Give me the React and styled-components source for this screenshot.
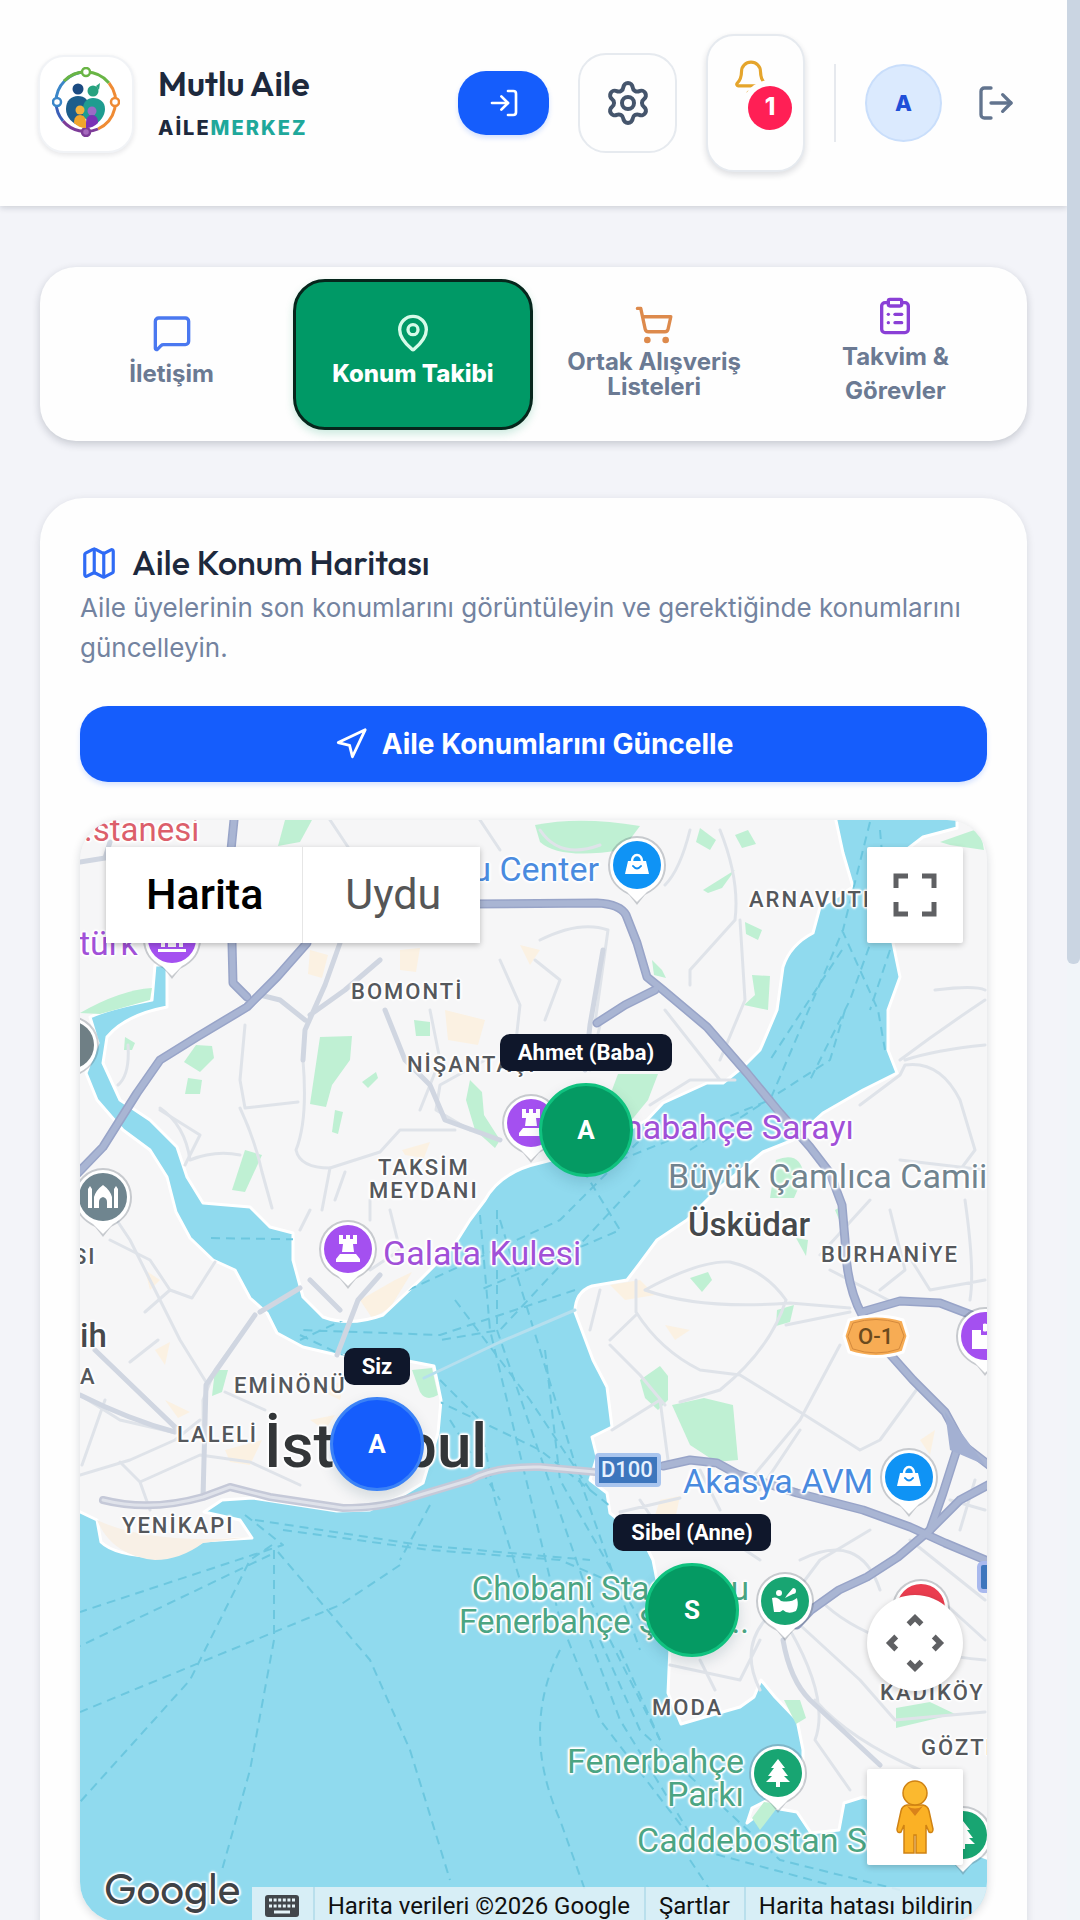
import React from 'react';
import styled, { createGlobalStyle } from 'styled-components';
import {
  LogIn, LogOut, Settings, Bell, MessageSquare, MapPin, ShoppingCart,
  ClipboardList, Map as MapIcon, Navigation, ChevronUp, ChevronDown, ChevronLeft, ChevronRight,
} from 'lucide-react';

const GlobalStyle = createGlobalStyle`
  *, *::before, *::after { box-sizing: border-box; }
  body { margin: 0; background: #f3f4f9; font-family: Inter, "Noto Sans", sans-serif; color: #1d293d; }
  button { font: inherit; color: inherit; border: 0; padding: 0; background: none; cursor: pointer; }
  h1, h2, p { margin: 0; }
  a { color: inherit; text-decoration: none; }
`;

const Shell = styled.div`
  display: grid;
  grid-template-columns: 1fr 13px;
  height: 100vh;
  overflow: hidden;
`;
const Page = styled.div`
  min-width: 0;
  overflow-y: auto;
  scrollbar-width: none;
`;
const ScrollTrack = styled.div`background: #f1f5f9;`;
const ScrollThumb = styled.div`
  height: 50.2%;
  background: #cad5e2;
  border-radius: 0 0 6px 6px;
`;

/* ---------- header ---------- */
const Header = styled.header`
  display: flex;
  align-items: center;
  height: 206px;
  padding: 0 46px 0 38px;
  background: #fefefe;
  box-shadow: 0 2px 6px rgba(15, 23, 43, 0.16);
`;
const LogoBox = styled.div`
  display: flex;
  align-items: center;
  justify-content: center;
  width: 96px;
  height: 98px;
  margin-top: 2px;
  padding-bottom: 4px;
  border-radius: 26px;
  border: 2px solid #f1f3f6;
  background: #fff;
  box-shadow: 0 2px 5px rgba(15, 23, 43, 0.1);
`;
const Brand = styled.div`
  display: flex;
  flex-direction: column;
  gap: 8px;
  margin: 2px 0 0 24px;
`;
const BrandName = styled.h1`
  font: 600 34px/40px Outfit, Lato, sans-serif;
  color: #1d293d;
`;
const BrandTag = styled.p`
  font-size: 20px;
  line-height: 32px;
  font-weight: 800;
  letter-spacing: 2px;
  color: #1d293d;
`;
const Teal = styled.span`color: #1fa89b;`;
const Actions = styled.div`
  display: flex;
  align-items: center;
  gap: 29px;
  margin-left: auto;
`;
const HeaderButton = styled.button`
  position: relative;
  display: flex;
  align-items: center;
  justify-content: center;
  width: ${(p) => p.$w}px;
  height: ${(p) => p.$h}px;
  border-radius: ${(p) => p.$r || 28}px;
  color: ${(p) => p.$color || '#45556c'};
`;
const EnterButton = styled(HeaderButton)`
  background: #155dfc;
  color: #fff;
  box-shadow: 0 3px 5px rgba(21, 93, 252, 0.18);
`;
const OutlineButton = styled(HeaderButton)`
  background: #fefefe;
  border: 2px solid #e6eaef;
`;
const BellButton = styled(OutlineButton)`
  align-items: flex-start;
  justify-content: flex-start;
  padding: 23px 0 0 24px;
  box-shadow: 0 3px 6px rgba(15, 23, 43, 0.14);
`;
const Badge = styled.span`
  position: absolute;
  left: 40px;
  top: 50px;
  width: 44px;
  height: 44px;
  border-radius: 50%;
  box-shadow: 0 0 0 6px #fefefe;
  background: #ff1f55;
  color: #fff;
  font-size: 24px;
  line-height: 42px;
  font-weight: 800;
  text-align: center;
`;
const Divider = styled.span`
  width: 2px;
  height: 78px;
  background: #e6e9ee;
`;
const Avatar = styled.button`
  width: 77px;
  height: 78px;
  border-radius: 50%;
  border: 2px solid #c9defb;
  background: #dbeafe;
  color: #1f4fd8;
  font-size: 22px;
  line-height: 70px;
  font-weight: 800;
`;

/* ---------- tabs ---------- */
const Main = styled.main`
  display: flex;
  flex-direction: column;
  gap: 57px;
  padding: 61px 40px 60px;
`;
const Tabs = styled.nav`
  display: grid;
  grid-template-columns: repeat(4, 1fr);
  gap: 2px;
  padding: 12px 12px 11px;
  background: #fefefe;
  border-radius: 36px;
  box-shadow: 0 3px 8px rgba(15, 23, 43, 0.2);
`;
const Tab = styled.button`
  display: flex;
  flex-direction: column;
  align-items: center;
  justify-content: center;
  gap: 4px;
  height: 151px;
  padding: 0 20px 6px;
  border-radius: 32px;
  font-size: 24px;
  font-weight: ${(p) => (p.$active ? 800 : 700)};
  line-height: ${(p) => p.$lh || 34}px;
  color: ${(p) => (p.$active ? '#fff' : '#6b7a93')};
  background: ${(p) => (p.$active ? '#009966' : 'transparent')};
  border: 3px solid ${(p) => (p.$active ? '#06261c' : 'transparent')};
  box-shadow: ${(p) => (p.$active ? '0 4px 8px rgba(0, 153, 102, 0.2)' : 'none')};
`;

/* ---------- map card ---------- */
const Card = styled.section`
  padding: 40px;
  background: #fefefe;
  border-radius: 44px;
  box-shadow: 0 2px 8px rgba(15, 23, 43, 0.12);
`;
const CardTitle = styled.h2`
  display: flex;
  align-items: center;
  gap: 14px;
  font: 500 34px/50px Outfit, Lato, sans-serif;
  color: #1d293d;
`;
const Lead = styled.p`
  font-size: 26px;
  line-height: 40px;
  color: #7383a0;
`;
const UpdateButton = styled.button`
  display: flex;
  align-items: center;
  justify-content: center;
  gap: 14px;
  width: 100%;
  height: 76px;
  margin: 38px 0;
  border-radius: 28px;
  background: #155dfc;
  color: #fff;
  font-size: 28px;
  font-weight: 700;
  box-shadow: 0 3px 5px rgba(21, 93, 252, 0.16);
`;

const MapFrame = styled.div`
  position: relative;
  height: 1102px;
  overflow: hidden;
  border-radius: 40px;
  background: #f6f6f7;
  box-shadow: 0 2px 10px rgba(15, 23, 43, 0.16);
  font-family: Roboto, "Noto Sans", sans-serif;
`;
const Terrain = styled.svg`
  display: block;
  width: 908px;
  height: 1102px;
`;

/* world pixel at the map's top left corner */
const ORIGIN = { x: 80, y: 820 };

const MapLabel = styled.span`
  position: absolute;
  ${(p) => (p.$right
    ? `right: calc(100% - ${p.$x - ORIGIN.x}px);`
    : `left: ${p.$x - ORIGIN.x}px;`)}
  top: ${(p) => p.$y - ORIGIN.y}px;
  white-space: pre;
  text-align: ${(p) => (p.$center ? 'center' : p.$right ? 'right' : 'left')};
  font-size: ${(p) => p.$size || 34}px;
  line-height: ${(p) => p.$lh || 33}px;
  font-weight: ${(p) => p.$weight || 400};
  color: ${(p) => p.$color};
  text-shadow: ${(p) => (p.$plain ? 'none' : `0 0 2px #fff, 1px 1px 1px #fff, -1px -1px 1px #fff, 1px -1px 1px #fff, -1px 1px 1px #fff,
    2px 0 2px #fff, -2px 0 2px #fff, 0 2px 2px #fff, 0 -2px 2px #fff`)};
`;
const District = styled(MapLabel)`
  font-size: 22px;
  line-height: 23px;
  font-weight: 500;
  letter-spacing: 2px;
  color: #55585c;
`;
const Wordmark = styled(MapLabel)`
  font-family: Outfit, Lato, sans-serif;
`;

const Member = styled.div`
  position: absolute;
  left: ${(p) => p.$x - ORIGIN.x - 100}px;
  top: ${(p) => p.$y - ORIGIN.y - 95}px;
  width: 200px;
  display: flex;
  flex-direction: column;
  align-items: center;
  gap: 12px;
`;
const MemberName = styled.span`
  padding: 0 18px;
  border-radius: 10px;
  background: #0f172b;
  color: #fff;
  font-size: 22px;
  line-height: 37px;
  font-weight: 700;
  white-space: nowrap;
`;
const MemberDot = styled.button`
  width: 94px;
  height: 94px;
  border-radius: 50%;
  border: 3px solid ${(p) => (p.$self ? '#3b82f6' : '#10c27f')};
  background: ${(p) => (p.$self ? '#155dfc' : '#059a63')};
  color: #fff;
  font-size: 26px;
  font-weight: 700;
  box-shadow: 0 6px 14px rgba(15, 60, 80, 0.15);
`;

const TypeSwitch = styled.div`
  position: absolute;
  left: 26px;
  top: 27px;
  display: flex;
  height: 96px;
  background: #fff;
  box-shadow: 0 2px 6px rgba(0, 0, 0, 0.25);
`;
const TypeButton = styled.button`
  padding: 0 39px 2px 40px;
  font-size: 43px;
  line-height: 40px;
  font-weight: ${(p) => (p.$active ? 500 : 400)};
  color: ${(p) => (p.$active ? '#000' : '#565656')};
  & + & { border-left: 1px solid #e6e6e6; padding-left: 42px; }
`;
const SquareControl = styled.button`
  position: absolute;
  right: 24px;
  ${(p) => (p.$top ? `top: ${p.$top}px;` : `bottom: ${p.$bottom}px;`)}
  display: flex;
  align-items: center;
  justify-content: center;
  width: 96px;
  height: 96px;
  border-radius: ${(p) => (p.$round ? '50%' : '2px')};
  background: #fff;
  color: #5f6063;
  box-shadow: 0 2px 6px rgba(0, 0, 0, 0.2);
`;
const PanGrid = styled.span`
  display: grid;
  grid-template-columns: repeat(3, 22px);
  grid-auto-rows: 22px;
  place-items: center;
  svg { width: 26px; height: 26px; stroke-linecap: butt; stroke-linejoin: miter; }
  svg:nth-child(1) { grid-area: 1 / 2; }
  svg:nth-child(2) { grid-area: 2 / 1; }
  svg:nth-child(3) { grid-area: 2 / 3; }
  svg:nth-child(4) { grid-area: 3 / 2; }
`;
const Credits = styled.div`
  position: absolute;
  right: 0;
  bottom: 0;
  display: flex;
  align-items: stretch;
  height: 35px;
  color: #101010;
  font-size: 24px;
  line-height: 34px;
  white-space: nowrap;
  background: rgba(232, 243, 248, 0.8);
  & > * { display: flex; align-items: center; padding: 2px 14px 0 13px; }
  & > * + * { border-left: 2px solid #b9dfec; }
`;

/* ---------- drawings ---------- */
const Logo = () => (
  <svg width="68" height="70" viewBox="0 0 68 70" fill="none" aria-hidden="true">
    <g strokeWidth="3">
      <path d="M34 5A30 30 0 0 0 4 35" stroke="#3b86c8" />
      <path d="M34 5A30 30 0 0 0 12 14" stroke="#69b545" />
      <path d="M34 5A30 30 0 0 1 57 16" stroke="#69b545" />
      <path d="M57 16A30 30 0 0 1 46 62" stroke="#ef8b34" />
      <path d="M46 62A30 30 0 0 1 11 54" stroke="#7d3c98" />
      <path d="M11 54A30 30 0 0 1 4 35" stroke="#3b5fb8" />
    </g>
    <g fill="#fff" strokeWidth="2.5">
      <circle cx="34" cy="5" r="4" stroke="#69b545" />
      <circle cx="63" cy="35" r="4" stroke="#ef8b34" />
      <circle cx="34" cy="65" r="4" stroke="#7d3c98" fill="#a569bd" />
      <circle cx="5" cy="35" r="4" stroke="#3b86c8" />
    </g>
    <circle cx="26" cy="22" r="5.5" fill="#1b4b82" />
    <path d="M14 42c0-8 5-13 12-13s11 4 11 12l-8 18C20 57 14 50 14 42z" fill="#1c5e8c" />
    <circle cx="41" cy="24" r="5.5" fill="#27a27f" />
    <path d="M44 19l4-3-1 7z" fill="#27a27f" />
    <path d="M31 42c0-7 4-11 10-11 7 0 12 4 12 11 0 7-5 13-11 16L31 50z" fill="#1f9c90" />
    <circle cx="28" cy="43" r="4.5" fill="#f4b23c" />
    <path d="M22 56c0-5 2-8 6-8s6 3 6 8v5c-5 0-9-2-12-5z" fill="#f0a52c" />
    <circle cx="40" cy="44" r="4.5" fill="#9a6bc6" />
    <path d="M34 61v-5c0-5 2-8 6-8s6 3 6 8c-3 3-7 5-12 5z" fill="#7a31b5" />
  </svg>
);

const WATER = 'M155 965L152 1000Q110 1008 90 1017L98 1043L86 1073L97 1100L123 1130L150 1150L167 1177L176 1212L190 1238L213 1260L235 1270L250 1298L267 1313L277 1333L303 1347L337 1355L403 1360L434 1366L441 1400L438 1433L423 1483L403 1495L370 1510L337 1511L253 1498L222 1500L204 1512L240 1520L252 1538L203 1541Q180 1556 160 1557Q115 1556 101 1542L97 1520L76 1510V1926H992V1860L965 1850L930 1815L884 1803L863 1797L844 1803L839 1830L811 1833L797 1812L768 1807L747 1823L752 1808L788 1790L803 1786L803 1750L797 1720L775 1697L761 1680L754 1697L740 1707L705 1717L681 1724L668 1693L670 1647L653 1560L643 1540L610 1513L607 1493L590 1480L597 1457L592 1437L612 1427L607 1387L593 1360L575 1312Q575 1292 592 1286L627 1280L640 1263L657 1240L687 1220L717 1190L763 1152L793 1140L823 1113L863 1090L897 1073L888 1050L888 1010L900 977L893 943L893 860L923 837L957 828V816H835L843 853L853 887L820 907L813 933Q790 945 783 967L777 1010L760 1050L743 1067L723 1083L707 1083L663 1103L647 1120L590 1150L540 1163Q500 1172 485 1200L470 1220L453 1247L420 1280L383 1315Q350 1327 323 1317L303 1297L293 1260L293 1233L270 1227L250 1207L203 1203L187 1177L177 1147L150 1120L120 1100L103 1063L107 1037Q125 1015 167 1007L167 965Z';
const PARKS = [
  'M320 1037L352 1036L350 1060L332 1085L326 1107L310 1104Z', 'M196 1045L212 1046L214 1058L200 1072L184 1062Z',
  'M188 1078L202 1080L200 1094L185 1094Z', 'M125 1037L135 1043L132 1050L124 1050Z', 'M285 820H312L300 842L278 846Z',
  'M535 825Q580 816 640 826L622 850Q560 860 540 842Z', 'M470 1080L482 1092L484 1115L500 1140L495 1148L475 1130L466 1100Z',
  'M245 1150L262 1155L245 1192L232 1190Z', 'M414 1020L430 1022L430 1036L416 1036Z', 'M362 1082L376 1072L378 1078L368 1088Z',
  'M335 1110L343 1112L338 1134L332 1132Z', 'M735 835L748 830L756 844L742 848Z', 'M703 890L735 870L722 888L708 893Z',
  'M752 975L770 976L768 1010L744 1005L755 995Z', 'M652 960L662 970L666 978L654 975Z', 'M745 922L762 930L758 940L746 934Z',
  'M618 1074H658L648 1100L630 1122L612 1090Z', 'M700 828L716 840L710 850L696 842Z', 'M640 1380L660 1366L668 1376V1400L658 1410L645 1398Z',
  'M672 1405L704 1398L733 1405L738 1460L716 1462L690 1445Z', 'M777 1310L794 1305L790 1322L776 1326Z', 'M690 1278L708 1272L712 1280L702 1292Z',
  'M776 1160Q800 1150 804 1175L794 1198H770Z', 'M80 1013Q120 990 152 988L150 1000L100 1014Z', 'M412 1370L432 1368L438 1395Q426 1402 420 1392Z',
  'M215 1370L228 1370L222 1392L212 1396Z', 'M896 1708L930 1702L955 1714L896 1728Z', 'M784 1700L800 1700L806 1718L796 1724Z',
  'M752 1818L764 1802L780 1804L760 1830Z', 'M940 842L980 828L984 850L950 845Z', 'M835 1210L842 1206L840 1222Z', 'M796 1238L808 1240L806 1256Z',
];
const SANDS = [
  'M310 950L328 955L322 978L308 974Z', 'M400 950L420 948L416 972L400 970Z', 'M445 1010L485 1020L478 1045L448 1040Z', 'M402 1150L430 1142L424 1158L405 1155Z',
  'M360 1300L395 1280L412 1272L390 1308L372 1318Z', 'M145 1270L160 1280L150 1290Z',
  'M610 1285L640 1280L655 1295L625 1300Z', 'M665 1325L690 1330L675 1340Z', 'M155 1350L170 1342L165 1365Z', 'M225 1450L262 1440L250 1465L230 1462Z', 'M165 1400L190 1412L178 1418Z',
  'M920 1440L935 1430L930 1455Z', 'M660 1500L680 1496L676 1515L655 1515Z', 'M320 1390L345 1380L340 1400Z', 'M310 1420L335 1415L325 1430Z', 'M520 945L540 950L530 965Z',
];
const STREETS = [
  'M128 1045Q130 1075 118 1085M160 1108Q185 1125 190 1160Q215 1150 240 1155M245 1025L240 1080L245 1108L298 1102M240 1108Q255 1140 262 1172L272 1208M303 1060Q308 1120 296 1150Q300 1168 330 1168L380 1152L400 1130L455 1130M330 820L350 850M485 1060L440 1085L436 1110L470 1130',
  'M480 820L500 850M540 830Q560 860 600 845M690 830Q680 870 665 885M720 830Q740 880 735 920L690 970L690 985M740 920L745 1000L720 1060M540 940Q580 920 608 930L595 1023M535 960L560 980L545 1020',
  'M330 1168L322 1210M345 1172L335 1200M160 1110L200 1135L185 1165M100 1195L130 1240L155 1290L180 1340L206 1382',
  'M110 1240L150 1260L170 1290L145 1312M170 1290L192 1298L215 1262M255 1315L215 1370L203 1400L204 1497M100 1355L180 1430M130 1362L158 1340M80 1395L120 1420L172 1432M80 1475L130 1460L175 1440L200 1420M105 1400L82 1465M120 1462L140 1482L150 1510M140 1482L200 1455L250 1462L300 1485M225 1392L265 1410',
  'M645 1290Q700 1310 790 1303L850 1308M645 1290Q700 1260 730 1262Q765 1270 786 1300M636 1280V1312Q660 1350 700 1370L740 1375L800 1412L860 1450M786 1300Q770 1350 720 1390L680 1402M786 1325L850 1312M610 1345L640 1375L665 1405M612 1430L660 1400L668 1460M840 1345L800 1420L750 1480M860 1450L880 1440L920 1385M600 1290L590 1330M610 1340L636 1315',
  'M900 1060Q940 1030 985 1000M905 1065L900 1075L860 1105M905 1065Q940 1060 960 1100L975 1150L960 1170M870 1200L820 1255M900 1160L985 1170M905 1060Q935 1050 985 1045M888 1300L830 1270M905 1250L930 1290L985 1280M890 1210L905 1270L880 1290M935 990Q975 985 985 990M965 1200Q975 1270 970 1300',
  'M870 1530L820 1560L790 1600M700 1520L760 1560M640 1500L660 1530L700 1540M620 1512L680 1498M790 1630Q830 1700 815 1740L850 1790M815 1700Q850 1740 920 1770M800 1625L860 1680L895 1720L985 1712M760 1690Q740 1650 765 1620M670 1665L740 1680L760 1640M700 1660L715 1690M820 1600Q870 1650 985 1660M800 1560Q860 1530 880 1590M930 1590L985 1640M910 1540L985 1600',
  'M735 1080L690 1080L650 1105M665 1010L720 1080M590 1070L600 1025M430 1010L440 1060L420 1110M500 960L520 1005L515 1050M700 1470L720 1510M760 1490L800 1430M950 1500L985 1510M960 1530L975 1480M370 1200V1220M310 1210L300 1230M390 1210L400 1250L370 1270',
];
const AVENUES = [
  'M340 943L325 985L305 1030L303 1060M305 1020L280 1000L260 995M385 1010L405 1060L430 1085L445 1120L500 1140M380 960L345 990L310 1015M603 950L590 1025L585 1070M80 862L105 858L110 842M260 1312L300 1288M337 1355L358 1300L380 1275M255 1315L206 1385L203 1497M95 1350L180 1432M80 1395Q130 1420 175 1432M340 1310L310 1280M783 1640Q790 1680 810 1700L880 1765',
];
const MOTORWAYS = [
  'M234 820L229 870L232 943L233 983L247 997', 'M307 943L277 977L247 1007L197 1037L160 1060L137 1093L103 1147L76 1175',
  'M470 904L597 903Q620 904 626 915L637 943L647 977L663 990L707 1027L747 1073L780 1113L810 1147L830 1173L842 1205L845 1240Q846 1285 862 1315L880 1343L913 1380L945 1412L963 1445L990 1466',
  'M862 1312L900 1301L940 1303L990 1322', 'M958 1446L943 1493L930 1530L898 1557L867 1577L839 1590L811 1610L797 1625',
  'M663 1466L690 1460L717 1463L737 1474L797 1493L863 1510L910 1527L945 1543L990 1562', 'M655 990L625 1005L597 1023', 'M930 1530L960 1500L988 1485',
];
const FERRIES = [
  'M870 822L843 930L770 1100L620 1160M880 830L886 900L850 1000L810 1080M842 930L878 1010L885 1050M842 950L770 1060M890 950L870 1010M845 1010L830 1060L690 1150M583 1170L620 1230L480 1290',
  'M660 1120L560 1220L300 1340M480 1215L490 1330L560 1620L600 1720L700 1850M497 1210L497 1330L590 1600L660 1740M640 1180L500 1330L440 1340M575 1290L440 1335L300 1330M500 1220L580 1480L640 1650M545 1350L560 1480L640 1620',
  'M283 1530L430 1550L560 1560L630 1590M255 1520L420 1545L590 1560M245 1515L283 1545L80 1612M270 1555L80 1646M272 1545L250 1560L190 1680L80 1802M274 1550V1640L250 1770L222 1870M278 1552L370 1660L410 1750L450 1880M400 1565L340 1605L80 1712',
  'M560 1650Q520 1730 560 1820L585 1890M590 1640L620 1720L700 1850L830 1885M600 1640L640 1730L780 1860L900 1890M620 1650L660 1740M690 1860L710 1890M340 1240L210 1238M440 1380L480 1420L495 1500L520 1580M430 1505L400 1560M300 1335L540 1450L640 1530M450 1420L500 1500M455 1300L530 1400L590 1490',
];
const SHORE_ROAD = 'M103 1500Q150 1512 203 1497L230 1487L270 1497L343 1508Q380 1508 403 1500L470 1480Q495 1466 540 1467L595 1472';

const Glyph = ({ kind }) => {
  switch (kind) {
    case 'bag':
      return (<g><path d="M-12 9L-9-4H9L12 9Z" fill="#fff" /><path d="M-5-4a5 6 0 0 1 10 0" stroke="#fff" strokeWidth="2.5" fill="none" /><path d="M-4 1q4 5 8 0" stroke="#0f8df2" strokeWidth="2" fill="none" /></g>);
    case 'tower':
      return <path d="M-9-14V-5H-5L-6 3H6L5-5H9V-14H5V-10H2V-14H-2V-10H-5V-14ZM-8 5L-12 10V13H12V10L8 5Z" fill="#fff" />;
    case 'tree':
      return <path d="M0-14L-7-5H-4L-10 3H-6L-12 9H-2V14H2V9H12L6 3H10L4-5H7Z" fill="#fff" />;
    case 'mosque':
      return <path d="M-15 11V-8L-13-11L-11-8V11ZM11 11V-8L13-11L15-8V11ZM-9 11V0Q-7-7 0-12Q7-7 9 0V11H4V5Q4 1 0 0Q-4 1-4 5V11Z" fill="#fff" />;
    case 'museum':
      return <path d="M-14 10H14V13H-14ZM-11-4H-7V8H-11ZM7-4H11V8H7ZM-4 8V0L0-4L4 0V8ZM-13-6L0-13L13-6Z" fill="#fff" />;
    case 'camera':
      return <path d="M-13-6H-4V-1H8L14 5V13H-13ZM-10-13L-8-8ZM-2-12A4 4 0 1 1-2-5Z" fill="#fff" />;
    case 'stadium':
      return <path d="M-13-3Q-8-5-4 0Q6 2 12-3Q14 5 11 10Q3 14-2 9L-5 11H-11ZM-6-11a3 3 0 1 1 0 6a3 3 0 1 1 0-6ZM8-13a3 3 0 1 1 0 6L0-3L2-6Z" fill="#fff" />;
    default:
      return null;
  }
};
const PLACES = [
  [637, 865, '#0f93f5', 'bag'], [172, 939, '#a450f0', 'museum'], [531, 1123, '#a450f0', 'tower'], [348, 1249, '#a450f0', 'tower'],
  [103, 1197, '#6f858f', 'mosque'], [70, 1045, '#6f7f85', 'none'], [985, 1336, '#a450f0', 'camera'], [909, 1477, '#0f93f5', 'bag'],
  [785, 1601, '#18a572', 'stadium'], [778, 1773, '#18a572', 'tree'], [963, 1835, '#18a572', 'tree'], [921, 1608, '#ea3d4f', 'none'],
];

const TerrainDrawing = () => (
  <Terrain viewBox="80 820 908 1102" fill="none" strokeLinejoin="round" strokeLinecap="round" aria-hidden="true">
    <defs>
      <clipPath id="sea"><path d={WATER} /></clipPath>
    </defs>
    <rect x="79" y="820" width="909" height="1102" fill="#f6f6f7" />
    {SANDS.map((d) => <path key={d} d={d} fill="#fbf1e2" />)}
    <path d={WATER} fill="#90daee" stroke="#fff" strokeWidth="3" />
    <path d="M97 1520Q150 1545 250 1537L203 1543Q180 1560 155 1560Q112 1556 97 1520Z" fill="#f8f0e6" />
    {PARKS.map((d) => <path key={d} d={d} fill="#bff0d3" />)}
    <g clipPath="url(#sea)">
      {FERRIES.map((d) => <path key={d} d={d} stroke="#6cc7df" strokeWidth="2" strokeDasharray="9 6" strokeLinecap="butt" />)}
    </g>
    {STREETS.map((d) => <path key={d} d={d} stroke="#dfe3e9" strokeWidth="3" />)}
    {AVENUES.map((d) => <path key={d} d={d} stroke="#d0d6e1" strokeWidth="5" />)}
    <path d={SHORE_ROAD} stroke="#c5c9d8" strokeWidth="8" />
    <path d={SHORE_ROAD} stroke="#dfe2ea" strokeWidth="3" />
    <path d="M424 1378L500 1342L575 1310" stroke="#b5dfee" strokeWidth="3" />
    {MOTORWAYS.map((d) => <path key={d} d={d} stroke="#98a4c8" strokeWidth="9" />)}
    {MOTORWAYS.map((d) => <path key={d} d={d} stroke="#a9b5d3" strokeWidth="6" />)}
    <path d="M945 1412L950 1450L985 1465L963 1435Z" fill="#a3b0d2" />
    <path d="M844 1336L849 1320Q876 1312 903 1320L908 1336L903 1352Q876 1361 849 1352Z" fill="#f7ac54" stroke="#fff" strokeWidth="3" />
    <path d="M848 1336L853 1323Q876 1316 899 1323L904 1336L899 1349Q876 1357 853 1349Z" stroke="#d48a3d" strokeWidth="1" />
    <rect x="597" y="1455" width="62" height="30" rx="2" fill="#3d76bd" stroke="#a9c5ee" strokeWidth="4" />
    <rect x="979" y="1563" width="30" height="28" rx="4" fill="#3d76bd" stroke="#a9b9ee" strokeWidth="4" />
    {PLACES.map(([x, y, fill, kind]) => (
      <g key={`${x}-${y}`} transform={`translate(${x} ${y})`}>
        <path d="M0 40Q-3 36-8 30Q-29 20-29 0A29 29 0 0 1 29 0Q29 20 8 30Q3 36 0 40Z" fill="#5b6570" opacity="0.3" />
        <path d="M0 37Q-4 33-10 27Q-27 18-27 0A27 27 0 0 1 27 0Q27 18 10 27Q4 33 0 37Z" fill="#fff" />
        <circle r="24" fill={fill} />
        <Glyph kind={kind} />
      </g>
    ))}
  </Terrain>
);

const PURPLE = '#a150d8';
const BLUE = '#4a8bdf';
const GREEN = '#4ba583';

const Pegman = () => (
  <svg width="40" height="76" viewBox="0 0 40 76" aria-hidden="true">
    <path d="M12 26H28Q33 27 34 32L38 50Q38 55 34 53L31 46V74H21V56H19V74H9V46L6 53Q2 55 2 50L6 32Q7 27 12 26Z" fill="#fbb125" stroke="#cf8213" strokeWidth="1.5" />
    <circle cx="20" cy="14" r="12" fill="#fbb92f" stroke="#cf8213" strokeWidth="1.5" />
    <path d="M12 27Q20 32 28 27L20 37Z" fill="#d9821a" />
  </svg>
);

const FullscreenIcon = () => (
  <svg width="44" height="44" viewBox="0 0 44 44" fill="none" stroke="currentColor" strokeWidth="5" aria-hidden="true">
    <path d="M3 15V3H15M29 3H41V15M41 29V41H29M15 41H3V29" />
  </svg>
);

const KeyboardIcon = () => (
  <svg width="34" height="22" viewBox="0 0 34 22" aria-hidden="true">
    <rect width="34" height="22" rx="3" fill="#42464b" />
    <path d="M4 5H30M4 11H30" stroke="#e5f3f8" strokeWidth="3" strokeDasharray="3 1.6" />
    <path d="M9 17H25" stroke="#e5f3f8" strokeWidth="3" />
  </svg>
);

export default function App() {
  return (
    <>
      <GlobalStyle />
      <Shell>
        <Page>
          <Header>
            <LogoBox><Logo /></LogoBox>
            <Brand>
              <BrandName>Mutlu Aile</BrandName>
              <BrandTag>AİLE<Teal>MERKEZ</Teal></BrandTag>
            </Brand>
            <Actions>
              <EnterButton $w={91} $h={64} aria-label="Giriş"><LogIn size={32} /></EnterButton>
              <OutlineButton $w={99} $h={100} aria-label="Ayarlar"><Settings size={48} /></OutlineButton>
              <BellButton $w={99} $h={138} $color="#e5a52c" aria-label="Bildirimler">
                <Bell size={38} strokeWidth={2} />
                <Badge>1</Badge>
              </BellButton>
              <Divider />
              <Avatar>A</Avatar>
              <HeaderButton $w={50} $h={60} $color="#62748e" aria-label="Çıkış"><LogOut size={40} /></HeaderButton>
            </Actions>
          </Header>

          <Main>
            <Tabs>
              <Tab><MessageSquare size={40} color="#4a78f0" />İletişim</Tab>
              <Tab $active><MapPin size={40} color="#d6fbe9" />Konum Takibi</Tab>
              <Tab $lh={25}><ShoppingCart size={40} color="#dd8a4c" />Ortak Alışveriş Listeleri</Tab>
              <Tab><ClipboardList size={40} color="#8a3fd6" />Takvim &amp; Görevler</Tab>
            </Tabs>

            <Card>
              <CardTitle><MapIcon size={38} color="#2f6bf5" />Aile Konum Haritası</CardTitle>
              <Lead>Aile üyelerinin son konumlarını görüntüleyin ve gerektiğinde konumlarını güncelleyin.</Lead>
              <UpdateButton><Navigation size={34} strokeWidth={2} />Aile Konumlarını Güncelle</UpdateButton>

              <MapFrame>
                <TerrainDrawing />
                <MapLabel $x={84} $y={813} $size={33} $color="#dc5f6b">.stanesi</MapLabel>
                <MapLabel $x={79} $y={927} $color={PURPLE}>türk</MapLabel>
                <MapLabel $right $x={599} $y={853} $color={BLUE}>u Center</MapLabel>
                <MapLabel $right $x={854} $y={1111} $color={PURPLE}>Dolmabahçe Sarayı</MapLabel>
                <MapLabel $x={668} $y={1160} $color="#71848f">Büyük Çamlıca Camii</MapLabel>
                <MapLabel $x={688} $y={1208} $weight={500} $size={33} $color="#46494c">Üsküdar</MapLabel>
                <MapLabel $x={383} $y={1237} $color={PURPLE}>Galata Kulesi</MapLabel>
                <MapLabel $x={80} $y={1319} $weight={500} $size={33} $color="#46494c">ih</MapLabel>
                <MapLabel $x={264} $y={1413} $size={62} $lh={66} $weight={500} $color="#333638">İstanbul</MapLabel>
                <MapLabel $x={683} $y={1465} $color={BLUE}>Akasya AVM</MapLabel>
                <MapLabel $right $x={749} $y={1572} $size={33} $color={GREEN}>{'Chobani Stadyumu\nFenerbahçe Şükrü...'}</MapLabel>
                <MapLabel $right $x={744} $y={1745} $color={GREEN}>{'Fenerbahçe\nParkı'}</MapLabel>
                <MapLabel $x={637} $y={1824} $color={GREEN}>Caddebostan Sahili</MapLabel>
                <District $x={351} $y={980}>BOMONTİ</District>
                <District $x={407} $y={1053}>NİŞANTAŞI</District>
                <District $center $x={369} $y={1156}>{'TAKSİM\nMEYDANI'}</District>
                <District $x={749} $y={888}>ARNAVUTKÖY</District>
                <District $x={821} $y={1243}>BURHANİYE</District>
                <District $x={73} $y={1245}>SI</District>
                <District $x={80} $y={1365}>A</District>
                <District $x={234} $y={1374}>EMİNÖNÜ</District>
                <District $x={177} $y={1423}>LALELİ</District>
                <District $x={122} $y={1514}>YENİKAPI</District>
                <District $x={652} $y={1696}>MODA</District>
                <District $x={880} $y={1681}>KADIKÖY</District>
                <District $x={921} $y={1736}>GÖZTEPE</District>
                <MapLabel $plain $x={858} $y={1325} $size={22} $lh={23} $weight={500} $color="#6b4a1d">O-1</MapLabel>
                <MapLabel $plain $x={601} $y={1458} $size={22} $lh={23} $weight={500} $color="#e6f1ff">D100</MapLabel>

                <Member $x={586} $y={1129}><MemberName>Ahmet (Baba)</MemberName><MemberDot>A</MemberDot></Member>
                <Member $x={377} $y={1443}><MemberName>Siz</MemberName><MemberDot $self>A</MemberDot></Member>
                <Member $x={692} $y={1609}><MemberName>Sibel (Anne)</MemberName><MemberDot>S</MemberDot></Member>

                <TypeSwitch>
                  <TypeButton $active>Harita</TypeButton>
                  <TypeButton>Uydu</TypeButton>
                </TypeSwitch>
                <SquareControl $top={27} aria-label="Tam ekran"><FullscreenIcon /></SquareControl>
                <SquareControl $round $bottom={231} aria-label="Haritayı kaydır">
                  <PanGrid>
                    <ChevronUp strokeWidth={5} /><ChevronLeft strokeWidth={5} /><ChevronRight strokeWidth={5} /><ChevronDown strokeWidth={5} />
                  </PanGrid>
                </SquareControl>
                <SquareControl $bottom={57} aria-label="Sokak görünümü"><Pegman /></SquareControl>

                <Wordmark $x={104} $y={1864} $size={42} $lh={50} $weight={400} $color="#3f4246">Google</Wordmark>
                <Credits>
                  <button aria-label="Klavye kısayolları"><KeyboardIcon /></button>
                  <span>Harita verileri ©2026 Google</span>
                  <a href="#sartlar">Şartlar</a>
                  <a href="#hata">Harita hatası bildirin</a>
                </Credits>
              </MapFrame>
            </Card>
          </Main>
        </Page>
        <ScrollTrack><ScrollThumb /></ScrollTrack>
      </Shell>
    </>
  );
}
